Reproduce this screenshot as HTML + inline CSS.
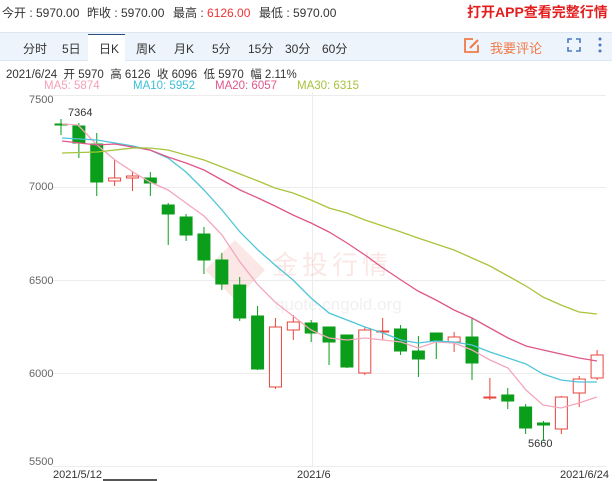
<!DOCTYPE html>
<html><head><meta charset="utf-8"><style>
body{margin:0;width:616px;height:481px;background:#fff;overflow:hidden;font-family:"Liberation Sans","Noto Sans CJK SC",sans-serif;position:relative}
.t{position:absolute;font-size:12px;color:#333;white-space:nowrap}
</style></head><body>
<div class="t" style="left:2px;top:4px">今开 : 5970.00</div>
<div class="t" style="left:87px;top:4px">昨收 : 5970.00</div>
<div class="t" style="left:173px;top:4px">最高 : <span style="color:#e33">6126.00</span></div>
<div class="t" style="left:259px;top:4px">最低 : 5970.00</div>
<div class="t" style="left:467px;top:2px;font-size:14px;font-weight:bold;color:#e31e1e">打开APP查看完整行情</div>
<div style="position:absolute;left:0;top:32px;width:612px;height:27px;background:#eef4fb;border-top:1px solid #dde7f2;border-bottom:1px solid #dde7f2"></div>
<div style="position:absolute;left:88px;top:34px;width:37px;height:27px;background:#fff;border-top:1px solid #2a4d80"></div>
<div class="t" style="left:23px;top:40px">分时</div>
<div class="t" style="left:62px;top:40px">5日</div>
<div class="t" style="left:99px;top:40px">日K</div>
<div class="t" style="left:136px;top:40px">周K</div>
<div class="t" style="left:174px;top:40px">月K</div>
<div class="t" style="left:212px;top:40px">5分</div>
<div class="t" style="left:248px;top:40px">15分</div>
<div class="t" style="left:285px;top:40px">30分</div>
<div class="t" style="left:322px;top:40px">60分</div>
<svg style="position:absolute;left:463px;top:37px" width="18" height="17" viewBox="0 0 18 17"><path d="M10 2H2v13h13V8" fill="none" stroke="#f07a48" stroke-width="1.8"/><path d="M7 11L15 3" stroke="#f07a48" stroke-width="2"/></svg>
<div class="t" style="left:490px;top:38px;font-size:13px;color:#f07a48">我要评论</div>
<svg style="position:absolute;left:567px;top:38px" width="14" height="14" viewBox="0 0 14 14"><path d="M1 5V1h4M9 1h4v4M13 9v4H9M5 13H1V9" fill="none" stroke="#4a78c0" stroke-width="1.6"/></svg>
<svg style="position:absolute;left:597px;top:36px" width="6" height="18"><circle cx="3" cy="3" r="1.5" fill="#4a78c0"/><circle cx="3" cy="9" r="1.5" fill="#4a78c0"/><circle cx="3" cy="15" r="1.5" fill="#4a78c0"/></svg>
<div class="t" style="left:6px;top:66px;font-size:11.5px">2021/6/24 &nbsp;开 5970 &nbsp;高 6126 &nbsp;收 6096 &nbsp;低 5970 &nbsp;幅 2.11%</div>
<div class="t" style="left:44px;top:80px;font-size:11.5px;color:#f4a0b8">MA5: 5874</div>
<div class="t" style="left:133px;top:80px;font-size:11.5px;color:#3bbfd6">MA10: 5952</div>
<div class="t" style="left:215px;top:80px;font-size:11.5px;color:#e0578a">MA20: 6057</div>
<div class="t" style="left:297px;top:80px;font-size:11.5px;color:#a6c23a">MA30: 6315</div>
<svg style="position:absolute;left:0;top:0" width="616" height="481" font-family="Liberation Sans,sans-serif">
<g stroke="#ececec" stroke-width="1">
<line x1="52" y1="95.5" x2="606" y2="95.5"/><line x1="52" y1="187.5" x2="606" y2="187.5"/><line x1="52" y1="280.5" x2="606" y2="280.5"/><line x1="52" y1="373.5" x2="606" y2="373.5"/><line x1="52" y1="466.5" x2="606" y2="466.5"/>
<line x1="312.5" y1="92" x2="312.5" y2="466"/>
</g>
<g font-size="11" fill="#666">
<text x="29" y="103">7500</text><text x="29" y="190">7000</text><text x="29" y="284">6500</text><text x="29" y="377">6000</text><text x="29" y="465">5500</text>
<text x="53" y="478" fill="#333">2021/5/12</text><text x="297" y="478" fill="#333">2021/6</text><text x="560" y="478" fill="#333">2021/6/24</text>
<text x="68" y="116" fill="#333">7364</text><text x="528" y="447" fill="#333">5660</text>
</g>
<rect x="103" y="479" width="54" height="2" fill="#555"/>
<g opacity="0.12" fill="#d43"><text x="272" y="274" font-size="26" font-family="Noto Sans CJK SC,sans-serif" letter-spacing="4">金投行情</text>
<text x="275" y="310" font-size="17" fill="#666" opacity="0.8">quote.cngold.org</text>
<path d="M205 270l30-30 30 30-30 30z"/></g>
<g id="c"></g>
<g fill="none" stroke-width="1.3">
<polyline stroke="#f4a6bc" points="62,124 78,125 97,145 115,160 133,172 150,182 168,190 186,203 204,216 222,235 240,262 258,285 275,302 293,316 311,330 329,338 347,340 365,338 383,340 401,342 418,348 436,342 454,343 472,350 490,360 508,368 526,390 543,405 561,408 579,403 597,397"/>
<polyline stroke="#4ec5d8" points="62,138 97,140 133,146 150,150 168,158 186,172 204,190 222,210 240,232 258,250 275,265 293,280 311,298 329,313 347,320 365,327 383,333 401,340 418,343 436,341 454,342 472,345 490,352 508,358 526,364 543,374 561,380 579,382 597,382"/>
<polyline stroke="#e0578a" points="62,141 97,145 115,144 150,150 168,157 186,163 204,170 222,180 240,190 258,198 275,206 293,215 311,223 329,232 347,243 365,255 383,268 401,280 418,291 436,300 454,310 472,318 490,328 508,338 526,346 543,350 561,354 579,358 597,361"/>
<polyline stroke="#a8c43c" points="62,153 97,152 133,148 150,148 168,150 186,155 204,160 222,167 240,174 258,181 275,188 293,193 311,200 329,208 347,213 365,220 383,226 401,232 418,238 436,244 454,250 472,258 490,266 508,276 526,286 543,297 561,305 579,312 597,314"/>
</g>
</svg>
<script>
var d=[[124,124,119,135,'g'],[126,143,123,158,'g'],[144,182,133,196,'g'],[178,181,160,186,'r'],[176,178,171,191,'r'],[178,183,172,196,'g'],[205,214,203,245,'g'],[217,235,214,241,'g'],[234,260,227,274,'g'],[260,284,253,290,'g'],[285,318,277,321,'g'],[316,369,306,370,'g'],[327,387,318,389,'r'],[322,330,315,340,'r'],[323,333,320,342,'g'],[327,342,327,365,'g'],[335,367,335,368,'g'],[330,373,327,375,'r'],[331,331,318,340,'r'],[329,351,325,355,'g'],[351,359,336,377,'g'],[333,341,333,359,'g'],[337,342,332,352,'r'],[337,363,318,380,'g'],[397,397,378,400,'r'],[395,401,388,409,'g'],[407,428,404,434,'g'],[423,425,421,441,'g'],[397,429,396,434,'r'],[379,393,376,407,'r'],[355,378,350,380,'r']];
var s='';d.forEach(function(c,i){var x=61+i*17.87,col=c[4]=='g'?'#0a9e1a':'#e8453c',h=Math.max(c[1]-c[0],1);
s+='<line x1="'+x+'" x2="'+x+'" y1="'+c[2]+'" y2="'+c[3]+'" stroke="'+col+'"/>';
s+='<rect x="'+(x-6)+'" y="'+c[0]+'" width="12" height="'+h+'" fill="'+(c[4]=='g'?col:'#fff')+'" stroke="'+col+'"/>';});
document.getElementById('c').innerHTML=s;
</script>
</body></html>
